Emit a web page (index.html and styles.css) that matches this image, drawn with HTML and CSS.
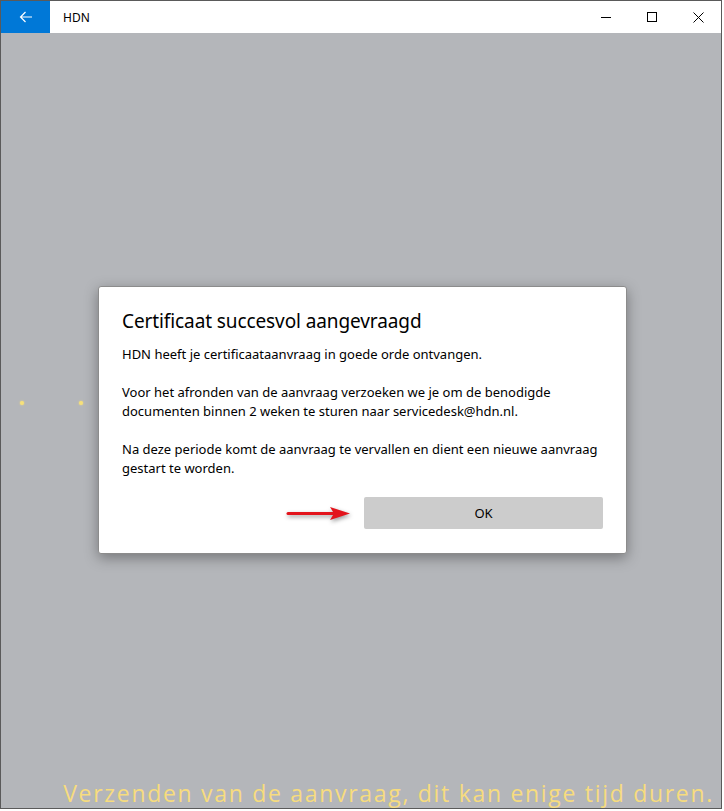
FILE: index.html
```html
<!DOCTYPE html>
<html>
<head>
    <title>HDN</title>
    <meta charset="UTF-8">
    <link rel="stylesheet" href="styles.css">
</head>
<body>
    <div class="window">
        <div class="titlebar">
            <div class="back-button">
                <svg width="14" height="12" viewBox="0 0 14 12"><path d="M13 6H1.5M6.5 1L1.5 6l5 5" fill="none" stroke="#fff" stroke-width="1.2"/></svg>
            </div>
            <div class="app-title">HDN</div>
            <div class="caption-buttons">
                <div class="caption-btn">
                    <svg width="10" height="10" viewBox="0 0 10 10"><path d="M0 5.5h10" stroke="#000" stroke-width="1"/></svg>
                </div>
                <div class="caption-btn">
                    <svg width="10" height="10" viewBox="0 0 10 10"><rect x="0.5" y="0.5" width="9" height="9" fill="none" stroke="#000" stroke-width="1"/></svg>
                </div>
                <div class="caption-btn">
                    <svg width="11" height="11" viewBox="0 0 11 11"><path d="M0.5 0.5l10 10M10.5 0.5l-10 10" stroke="#000" stroke-width="1"/></svg>
                </div>
            </div>
        </div>

        <div class="content">
            <div class="loading-dots">
                <span></span>
                <span></span>
            </div>

            <div class="dialog">
                <h2 class="dialog-title">Certificaat succesvol aangevraagd</h2>
                <div class="dialog-text">
                    <p>HDN heeft je certificaataanvraag in goede orde ontvangen.</p>
                    <p>Voor het afronden van de aanvraag verzoeken we je om de benodigde documenten binnen 2 weken te sturen naar servicedesk@hdn.nl.</p>
                    <p>Na deze periode komt de aanvraag te vervallen en dient een nieuwe aanvraag gestart te worden.</p>
                </div>
                <div class="dialog-actions">
                    <svg class="arrow" width="66" height="16" viewBox="0 0 66 16">
                        <path d="M2 8.5h46" stroke="#e3141c" stroke-width="3" stroke-linecap="round"/>
                        <path d="M44 2l20 6.5-20 6.5 4-6.5z" fill="#e3141c"/>
                    </svg>
                    <button class="ok-button">OK</button>
                </div>
            </div>

            <div class="status-text">Verzenden van de aanvraag, dit kan enige tijd duren.</div>
        </div>
    </div>
</body>
</html>
```

FILE: styles.css
```css
* {
    margin: 0;
    padding: 0;
    box-sizing: border-box;
}

body {
    background: white;
    font-family: "Noto Sans", "Open Sans", sans-serif;
    width: 724px;
    height: 811px;
    overflow: hidden;
}

.window {
    width: 722px;
    height: 809px;
    border: 1px solid #5a5a5a;
    display: flex;
    flex-direction: column;
}

.titlebar {
    height: 32px;
    background: white;
    display: flex;
    align-items: center;
}

.back-button {
    width: 49px;
    height: 32px;
    background: #0078d7;
    display: flex;
    align-items: center;
    justify-content: center;
}

.app-title {
    flex: 1;
    padding-left: 13px;
    font-size: 12px;
    color: #000;
}

.caption-buttons {
    display: flex;
}

.caption-btn {
    width: 46px;
    height: 32px;
    display: flex;
    align-items: center;
    justify-content: center;
}

.content {
    flex: 1;
    background: #b4b6ba;
    position: relative;
    display: flex;
    flex-direction: column;
    align-items: flex-end;
    justify-content: flex-end;
}

.loading-dots {
    position: absolute;
    left: 19px;
    top: 368px;
    display: flex;
    gap: 55px;
}

.loading-dots span {
    width: 4px;
    height: 4px;
    border-radius: 50%;
    background: #f6e07a;
    box-shadow: 0 0 2px #f6e07a;
}

.dialog {
    position: absolute;
    left: 97px;
    top: 253px;
    width: 529px;
    height: 268px;
    background: white;
    border: 1px solid #8c8c8c;
    border-radius: 3px;
    box-shadow: 0 4px 14px rgba(0, 0, 0, 0.35);
    padding: 21px 23px 0 23px;
}

.dialog-title {
    font-size: 19px;
    font-weight: normal;
    color: #000;
    line-height: 26px;
    margin-bottom: 11px;
    letter-spacing: -0.1px;
}

.dialog-text {
    font-size: 13px;
    line-height: 19px;
    color: #000;
}

.dialog-text p {
    margin-bottom: 19px;
}

.dialog-actions {
    display: flex;
    align-items: center;
    justify-content: flex-end;
    gap: 12px;
    margin-top: 11px;
}

.arrow {
    filter: drop-shadow(1px 2px 2px rgba(0, 0, 0, 0.4));
}

.ok-button {
    width: 239px;
    height: 32px;
    background: #cccccc;
    border: none;
    border-radius: 2px;
    font-family: inherit;
    font-size: 13px;
    color: #000;
}

.status-text {
    font-family: "Open Sans", sans-serif;
    font-weight: 400;
    font-size: 23px;
    letter-spacing: 1.7px;
    color: #f7dc7e;
    padding-right: 7px;
    padding-bottom: 1px;
    line-height: 28px;
    white-space: nowrap;
}
```
